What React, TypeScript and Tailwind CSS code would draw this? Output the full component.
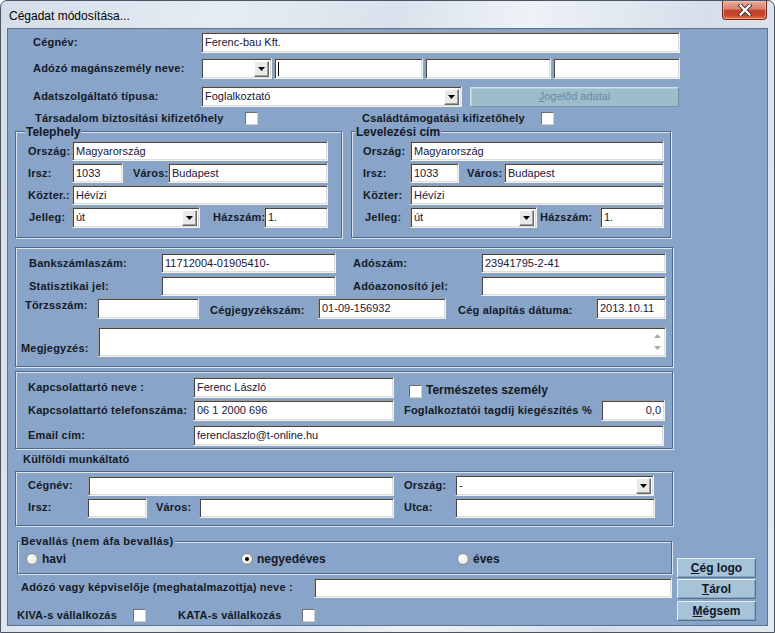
import React from "react";

const sunken =
  "bg-white border border-t-[#9c9c9c] border-l-[#9c9c9c] border-b-[#f2f2f2] border-r-[#f2f2f2] shadow-[inset_1px_1px_0_#474747,inset_-1px_-1px_0_#dcdcdc]";

function Lbl({ c, children }: { c?: string; children: React.ReactNode }) {
  return (
    <span className={`shrink-0 whitespace-nowrap text-[11px] font-bold leading-[13px] tracking-[0.2px] text-[#141a26] ${c ?? ""}`}>
      {children}
    </span>
  );
}

function Fld({ c, v, right, caret }: { c: string; v?: string; right?: boolean; caret?: boolean }) {
  return (
    <div
      className={`${sunken} flex shrink-0 items-center overflow-hidden whitespace-nowrap px-[3px] text-[11px] leading-none text-[#22163a] ${
        right ? "justify-end" : ""
      } ${c}`}
    >
      {caret && <span className="h-[14px] w-px bg-black" />}
      {v}
    </div>
  );
}

function Cmb({ c, v }: { c: string; v?: string }) {
  return (
    <div className={`${sunken} flex shrink-0 items-center pl-[3px] pr-[2px] text-[11px] leading-none text-[#22163a] ${c}`}>
      <span className="flex-1 truncate">{v}</span>
      <span className="flex h-[16px] w-[15px] items-center justify-center border border-t-white border-l-white border-b-[#696969] border-r-[#696969] bg-[#e9e9e9] shadow-[inset_-1px_-1px_0_#a0a0a0]">
        <svg width="7" height="4" viewBox="0 0 7 4">
          <path d="M0 0h7L3.5 4z" fill="#000" />
        </svg>
      </span>
    </div>
  );
}

function Check({ c }: { c?: string }) {
  return (
    <span
      className={`block h-[13px] w-[13px] shrink-0 border border-t-[#707070] border-l-[#707070] border-b-[#cfcfcf] border-r-[#cfcfcf] bg-white ${c ?? ""}`}
    />
  );
}

function Grp({ c, title, tc, children }: { c: string; title?: string; tc?: string; children: React.ReactNode }) {
  return (
    <div className={`relative shrink-0 border border-[#4f6789] shadow-[inset_1px_1px_0_#dce6f2,1px_1px_0_#dce6f2] ${c}`}>
      {title && (
        <span className={`absolute whitespace-nowrap bg-[#88a4c8] px-px font-bold text-[#141a26] ${tc ?? ""}`}>{title}</span>
      )}
      {children}
    </div>
  );
}

function Radio({ on, label }: { on?: boolean; label: string }) {
  return (
    <div className="flex items-center">
      <span className="flex h-[12px] w-[12px] items-center justify-center rounded-full border border-[#8c8c8c] bg-[radial-gradient(circle_at_35%_35%,#ffffff,#e8e8e8_70%,#cfcfcf)]">
        {on && <span className="h-[4px] w-[4px] rounded-full bg-black" />}
      </span>
      <span className="ml-[4px] text-[12px] font-bold leading-none text-[#141a26]">{label}</span>
    </div>
  );
}

function Btn({ u, rest, c }: { u: string; rest: string; c?: string }) {
  return (
    <div
      className={`flex h-[20px] w-[79px] items-center justify-center border border-t-[#e8f0f6] border-l-[#e8f0f6] border-b-[#55728f] border-r-[#55728f] bg-[#a7c3d8] text-[12px] font-bold text-[#0f1626] shadow-[inset_-1px_-1px_0_#8aa6be] ${c ?? ""}`}
    >
      <span className="underline underline-offset-[1px]">{u}</span>
      {rest}
    </div>
  );
}

export default function App() {
  return (
    <div className="flex h-[633px] w-[775px] flex-col overflow-hidden rounded-t-[7px] border border-[#4a5462] bg-[linear-gradient(100deg,#d3dde9_0%,#e6ecf3_25%,#d9e2ec_45%,#eef2f7_60%,#d5dfea_80%,#e2e8f0_100%)] font-['Liberation_Sans',Arial,sans-serif]">
      {/* title bar */}
      <div className="flex h-[27px] shrink-0 items-start">
        <span className="ml-[8px] mt-[8px] text-[12px] leading-[14px] text-black">Cégadat módosítása...</span>
        <div className="ml-auto mr-[7px] flex h-[19px] w-[45px] items-center justify-center rounded-b-[4px] border border-t-0 border-[#6b2a1f] bg-[linear-gradient(180deg,#e9ab9a_0%,#dc806a_45%,#c5412a_52%,#c9462c_80%,#e07a55_100%)] shadow-[inset_0_0_0_1px_rgba(255,220,210,0.45)]">
          <svg width="16" height="12" viewBox="0 0 16 12">
            <path d="M3.5 1.5L12.5 10.5M12.5 1.5L3.5 10.5" stroke="#4a3a38" strokeWidth="4.2" strokeLinecap="square" />
            <path d="M3.5 1.5L12.5 10.5M12.5 1.5L3.5 10.5" stroke="#ffffff" strokeWidth="2.2" strokeLinecap="square" />
          </svg>
        </div>
      </div>

      {/* client area */}
      <div className="ml-[6px] flex h-[598px] w-[761px] shrink-0 flex-col border border-[#5f7089] bg-[#88a4c8]">
        <div className="mt-[3px] flex h-[21px] items-center">
          <Lbl c="ml-[25px] w-[168px]">Cégnév:</Lbl>
          <Fld c="h-[21px] w-[479px]" v="Ferenc-bau Kft." />
        </div>

        <div className="mt-[5px] flex h-[21px] items-center">
          <Lbl c="ml-[25px] w-[168px]">Adózó magánszemély neve:</Lbl>
          <Cmb c="h-[21px] w-[71px]" />
          <Fld c="ml-[2px] h-[21px] w-[149px]" caret />
          <Fld c="ml-[2px] h-[21px] w-[126px]" />
          <Fld c="ml-[2px] h-[21px] w-[127px]" />
        </div>

        <div className="mt-[7px] flex h-[21px] items-center">
          <Lbl c="ml-[25px] w-[168px]">Adatszolgáltató típusa:</Lbl>
          <Cmb c="h-[21px] w-[261px]" v="Foglalkoztató" />
          <div className="ml-[8px] flex h-[20px] w-[209px] items-center justify-center border border-t-[#cfe0ea] border-l-[#cfe0ea] border-b-[#6e91a6] border-r-[#6e91a6] bg-[#9dbdcd] text-[11px] text-[#6a8a9f] shadow-[inset_1px_1px_0_#b4cfdc]">
            <span className="underline">J</span>ogelőd adatai
          </div>
        </div>

        <div className="mt-[4px] flex h-[15px] items-center">
          <Lbl c="ml-[27px] w-[210px]">Társadalom biztosítási kifizetőhely</Lbl>
          <Check />
          <Lbl c="ml-[104px] w-[179px]">Családtámogatási kifizetőhely</Lbl>
          <Check />
        </div>

        {/* Telephely + Levelezési cím */}
        <div className="mt-[5px] flex">
          <Grp c="ml-[7px] h-[107px] w-[327px]" title="Telephely" tc="-top-[7px] left-[9px] text-[12px] leading-[14px]">
            <div className="flex flex-col">
              <div className="mt-[9px] flex h-[20px] items-center">
                <Lbl c="ml-[12px] w-[44px]">Ország:</Lbl>
                <Fld c="h-[20px] w-[256px]" v="Magyarország" />
              </div>
              <div className="mt-[2px] flex h-[20px] items-center">
                <Lbl c="ml-[12px] w-[44px]">Irsz:</Lbl>
                <Fld c="h-[20px] w-[51px]" v="1033" />
                <Lbl c="ml-[10px] w-[35px]">Város:</Lbl>
                <Fld c="h-[20px] w-[160px]" v="Budapest" />
              </div>
              <div className="mt-[2px] flex h-[20px] items-center">
                <Lbl c="ml-[12px] w-[44px]">Közter.:</Lbl>
                <Fld c="h-[20px] w-[256px]" v="Hévízi" />
              </div>
              <div className="mt-[2px] flex h-[21px] items-center">
                <Lbl c="ml-[13px] w-[43px]">Jelleg:</Lbl>
                <Cmb c="h-[21px] w-[128px]" v="út" />
                <Lbl c="ml-[13px] w-[51px]">Házszám:</Lbl>
                <Fld c="h-[21px] w-[64px]" v="1." />
              </div>
            </div>
          </Grp>

          <Grp c="ml-[9px] h-[107px] w-[320px]" title="Levelezési cím" tc="-top-[7px] left-[3px] text-[12px] leading-[14px]">
            <div className="flex flex-col">
              <div className="mt-[9px] flex h-[20px] items-center">
                <Lbl c="ml-[11px] w-[47px]">Ország:</Lbl>
                <Fld c="h-[20px] w-[254px]" v="Magyarország" />
              </div>
              <div className="mt-[2px] flex h-[20px] items-center">
                <Lbl c="ml-[11px] w-[47px]">Irsz:</Lbl>
                <Fld c="h-[20px] w-[49px]" v="1033" />
                <Lbl c="ml-[8px] w-[37px]">Város:</Lbl>
                <Fld c="h-[20px] w-[160px]" v="Budapest" />
              </div>
              <div className="mt-[2px] flex h-[20px] items-center">
                <Lbl c="ml-[11px] w-[47px]">Közter:</Lbl>
                <Fld c="h-[20px] w-[254px]" v="Hévízi" />
              </div>
              <div className="mt-[2px] flex h-[21px] items-center">
                <Lbl c="ml-[13px] w-[45px]">Jelleg:</Lbl>
                <Cmb c="h-[21px] w-[127px]" v="út" />
                <Lbl c="ml-[3px] w-[60px]">Házszám:</Lbl>
                <Fld c="h-[21px] w-[64px]" v="1." />
              </div>
            </div>
          </Grp>
        </div>

        {/* bank / registry data */}
        <Grp c="ml-[7px] mt-[9px] h-[120px] w-[658px]">
          <div className="flex flex-col">
            <div className="mt-[5px] flex h-[20px] items-center">
              <Lbl c="ml-[13px] w-[132px]">Bankszámlaszám:</Lbl>
              <Fld c="h-[20px] w-[175px]" v="11712004-01905410-" />
              <Lbl c="ml-[17px] w-[128px]">Adószám:</Lbl>
              <Fld c="h-[20px] w-[185px]" v="23941795-2-41" />
            </div>
            <div className="mt-[3px] flex h-[20px] items-center">
              <Lbl c="ml-[13px] w-[132px]">Statisztikai jel:</Lbl>
              <Fld c="h-[20px] w-[175px]" />
              <Lbl c="ml-[17px] w-[128px]">Adóazonosító jel:</Lbl>
              <Fld c="h-[20px] w-[185px]" />
            </div>
            <div className="mt-[2px] flex h-[21px] items-center">
              <Lbl c="ml-[9px] w-[72px] self-start pt-[1px]">Törzsszám:</Lbl>
              <Fld c="h-[21px] w-[102px]" />
              <Lbl c="ml-[11px] w-[108px] pt-[4px]">Cégjegyzékszám:</Lbl>
              <Fld c="h-[21px] w-[128px]" v="01-09-156932" />
              <Lbl c="ml-[12px] w-[138px] pt-[4px]">Cég alapítás dátuma:</Lbl>
              <Fld c="h-[21px] w-[70px]" v="2013.10.11" />
            </div>
            <div className="mt-[8px] flex h-[30px] items-center">
              <Lbl c="ml-[5px] w-[77px] pt-[12px]">Megjegyzés:</Lbl>
              <div className={`${sunken} flex h-[30px] w-[568px] justify-end`}>
                <div className="flex w-[16px] flex-col items-center justify-between py-[6px]">
                  <svg width="7" height="4" viewBox="0 0 7 4">
                    <path d="M0 4h7L3.5 0z" fill="#a9a9a9" />
                  </svg>
                  <svg width="7" height="4" viewBox="0 0 7 4">
                    <path d="M0 0h7L3.5 4z" fill="#a9a9a9" />
                  </svg>
                </div>
              </div>
            </div>
          </div>
        </Grp>

        {/* contact */}
        <Grp c="ml-[7px] mt-[4px] h-[78px] w-[658px]">
          <div className="flex flex-col">
            <div className="mt-[5px] flex h-[21px] items-center">
              <Lbl c="ml-[12px] w-[165px]">Kapcsolattartó neve :</Lbl>
              <Fld c="h-[21px] w-[201px]" v="Ferenc László" />
              <Check c="ml-[15px] self-start mt-[8px]" />
              <span className="ml-[4px] mt-[6px] self-start whitespace-nowrap text-[12px] font-bold leading-[14px] text-[#141a26]">
                Természetes személy
              </span>
            </div>
            <div className="mt-[2px] flex h-[21px] items-center">
              <Lbl c="ml-[12px] w-[165px]">Kapcsolattartó telefonszáma:</Lbl>
              <Fld c="h-[21px] w-[201px]" v="06 1 2000 696" />
              <Lbl c="ml-[10px] w-[197px]">Foglalkoztatói tagdíj kiegészítés %</Lbl>
              <Fld c="h-[21px] w-[64px]" v="0,0" right />
            </div>
            <div className="mt-[4px] flex h-[21px] items-center">
              <Lbl c="ml-[12px] w-[165px]">Email cím:</Lbl>
              <Fld c="h-[21px] w-[471px]" v="ferenclaszlo@t-online.hu" />
            </div>
          </div>
        </Grp>

        <div className="mt-[2px] flex h-[16px] items-center">
          <Lbl c="ml-[15px]">Külföldi munkáltató</Lbl>
        </div>

        {/* foreign employer */}
        <Grp c="ml-[7px] mt-[4px] h-[55px] w-[658px]">
          <div className="flex flex-col">
            <div className="mt-[3px] flex h-[21px] items-center">
              <Lbl c="ml-[12px] w-[60px]">Cégnév:</Lbl>
              <Fld c="h-[20px] w-[306px]" />
              <Lbl c="ml-[10px] w-[51px]">Ország:</Lbl>
              <Cmb c="h-[21px] w-[199px]" v="-" />
            </div>
            <div className="mt-[1px] flex h-[21px] items-center">
              <Lbl c="ml-[12px] w-[59px]">Irsz:</Lbl>
              <Fld c="h-[20px] w-[60px]" />
              <Lbl c="ml-[9px] w-[43px]">Város:</Lbl>
              <Fld c="h-[20px] w-[195px]" />
              <Lbl c="ml-[10px] w-[51px]">Utca:</Lbl>
              <Fld c="h-[20px] w-[200px]" />
            </div>
          </div>
        </Grp>

        {/* bottom section */}
        <div className="mt-[15px] flex">
          <div className="flex w-[664px] flex-col">
            <Grp
              c="ml-[9px] h-[33px] w-[655px]"
              title="Bevallás (nem áfa bevallás)"
              tc="-top-[7px] left-[2px] text-[11px] leading-[13px] tracking-[0.35px]"
            >
              <div className="flex h-full items-center pt-[3px]">
                <div className="ml-[8px] w-[215px]">
                  <Radio label="havi" />
                </div>
                <div className="w-[216px]">
                  <Radio on label="negyedéves" />
                </div>
                <Radio label="éves" />
              </div>
            </Grp>
            <div className="mt-[3px] flex h-[21px] items-center">
              <Lbl c="ml-[13px] w-[293px]">Adózó vagy képviselője (meghatalmazottja) neve :</Lbl>
              <Fld c="h-[20px] w-[358px]" />
            </div>
            <div className="mt-[11px] flex h-[13px] items-center">
              <Lbl c="ml-[9px] w-[116px]">KIVA-s vállalkozás</Lbl>
              <Check />
              <Lbl c="ml-[32px] w-[124px]">KATA-s vállalkozás</Lbl>
              <Check />
            </div>
          </div>
          <div className="ml-[5px] flex w-[79px] flex-col pt-[17px]">
            <Btn u="C" rest="ég logo" />
            <Btn u="T" rest="árol" c="mt-[1px]" />
            <Btn u="M" rest="égsem" c="mt-[2px]" />
          </div>
        </div>
      </div>
    </div>
  );
}
